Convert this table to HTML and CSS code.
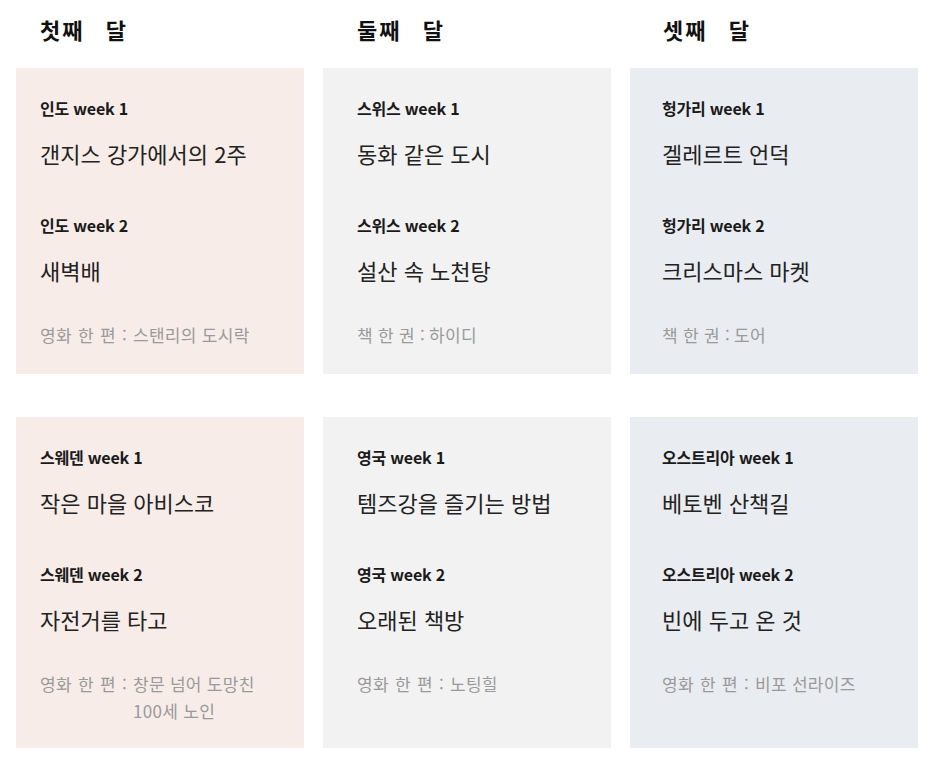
FILE: index.html
```html
<!DOCTYPE html>
<html lang="ko">
<head>
<meta charset="utf-8">
<link rel="stylesheet" href="styles.css">
</head>
<body>
<div class="board">
  <h2 class="month col1">첫째 달</h2>
  <h2 class="month col2">둘째 달</h2>
  <h2 class="month col3">셋째 달</h2>

  <div class="card pink col1">
    <div class="label">인도 week 1</div>
    <div class="title">갠지스 강가에서의 2주</div>
    <div class="label second">인도 week 2</div>
    <div class="title">새벽배</div>
    <div class="extra"><span class="key">영화 한 편 :</span><span>스탠리의 도시락</span></div>
  </div>
  <div class="card gray col2">
    <div class="label">스위스 week 1</div>
    <div class="title">동화 같은 도시</div>
    <div class="label second">스위스 week 2</div>
    <div class="title">설산 속 노천탕</div>
    <div class="extra"><span class="key short">책 한 권 :</span><span>하이디</span></div>
  </div>
  <div class="card blue col3">
    <div class="label">헝가리 week 1</div>
    <div class="title">겔레르트 언덕</div>
    <div class="label second">헝가리 week 2</div>
    <div class="title">크리스마스 마켓</div>
    <div class="extra"><span class="key short">책 한 권 :</span><span>도어</span></div>
  </div>

  <div class="card pink col1 lower">
    <div class="label">스웨덴 week 1</div>
    <div class="title">작은 마을 아비스코</div>
    <div class="label second">스웨덴 week 2</div>
    <div class="title">자전거를 타고</div>
    <div class="extra"><span class="key">영화 한 편 :</span><span>창문 넘어 도망친<br>100세 노인</span></div>
  </div>
  <div class="card gray col2 lower">
    <div class="label">영국 week 1</div>
    <div class="title">템즈강을 즐기는 방법</div>
    <div class="label second">영국 week 2</div>
    <div class="title">오래된 책방</div>
    <div class="extra"><span class="key">영화 한 편 :</span><span>노팅힐</span></div>
  </div>
  <div class="card blue col3 lower">
    <div class="label">오스트리아 week 1</div>
    <div class="title">베토벤 산책길</div>
    <div class="label second">오스트리아 week 2</div>
    <div class="title">빈에 두고 온 것</div>
    <div class="extra"><span class="key">영화 한 편 :</span><span>비포 선라이즈</span></div>
  </div>
</div>
</body>
</html>
```

FILE: styles.css
```css
* { box-sizing: border-box; }
html, body { margin: 0; padding: 0; background: #ffffff; }
body {
  font-family: "Noto Sans CJK KR", "Noto Sans", sans-serif;
  color: #1a1a1a;
}
.board {
  display: grid;
  grid-template-columns: 288px 288px 288px;
  column-gap: 19px;
  margin-left: 16px;
  padding-top: 14px;
}
.month {
  margin: 0;
  height: 54px;
  line-height: 30px;
  font-size: 22px;
  font-weight: 700;
  letter-spacing: 2px;
  word-spacing: 13px;
  color: #111;
}
.month.col1 { padding-left: 24px; }
.month.col2 { padding-left: 34px; }
.month.col3 { padding-left: 33px; }
.card {
  padding-top: 28px;
  padding-bottom: 26px;
}
.card.col1 { padding-left: 24px; }
.card.col2 { padding-left: 34px; }
.card.col3 { padding-left: 32px; }
.card.lower { margin-top: 43px; padding-bottom: 24px; }
.pink { background: #f7ece8; }
.gray { background: #f2f2f2; }
.blue { background: #e9ecf0; }
.label {
  font-size: 16px;
  line-height: 24px;
  font-weight: 700;
  color: #1a1a1a;
  letter-spacing: -0.2px;
}
.label.second { margin-top: 44px; }
.title {
  margin-top: 17px;
  font-size: 22px;
  line-height: 32px;
  font-weight: 400;
  color: #222;
  letter-spacing: 0;
}
.extra {
  display: flex;
  margin-top: 35px;
  font-size: 17px;
  line-height: 27px;
  color: #9a9a9a;
  letter-spacing: 0.3px;
}
.extra span { white-space: nowrap; }
.extra .key { padding-right: 6px; word-spacing: 1px; }
.extra .key.short { padding-right: 4px; word-spacing: 0; }
```
